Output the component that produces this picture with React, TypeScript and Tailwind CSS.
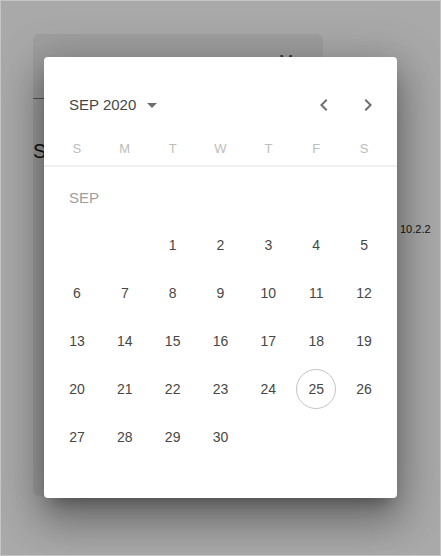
const weekdays = ['S', 'M', 'T', 'W', 'T', 'F', 'S'];

// September 2020 starts on a Tuesday
const leadingBlanks = 2;
const daysInMonth = 30;
const selectedDay = 25;

function ArrowDropDown() {
  return (
    <svg width="24" height="24" viewBox="0 0 24 24" className="fill-[#6f6f6f]">
      <path d="M7 10l5 5 5-5z" />
    </svg>
  );
}

function Chevron({ dir }: { dir: 'left' | 'right' }) {
  return (
    <svg width="24" height="24" viewBox="0 0 24 24" className="fill-[#6e6e6e]">
      {dir === 'left' ? (
        <path d="M15.41 7.41 14 6l-6 6 6 6 1.41-1.41L10.83 12z" />
      ) : (
        <path d="M10 6 8.59 7.41 13.17 12l-4.58 4.59L10 18l6-6z" />
      )}
    </svg>
  );
}

function DatePicker() {
  const cells: (number | null)[] = [
    ...Array.from({ length: leadingBlanks }, () => null),
    ...Array.from({ length: daysInMonth }, (_, i) => i + 1),
  ];

  return (
    <div className="absolute left-[43px] top-[56px] w-[353px] h-[441px] bg-white rounded-[4px] pt-[24px] shadow-[0_11px_15px_-7px_rgba(0,0,0,0.3),0_24px_38px_3px_rgba(0,0,0,0.22),0_9px_46px_8px_rgba(0,0,0,0.2)]">
      <div className="h-[48px] flex items-center pl-[25px] pr-[17px]">
        <div className="flex items-center gap-[4px]">
          <span className="text-[15px] text-[#474747]">SEP 2020</span>
          <ArrowDropDown />
        </div>
        <div className="ml-auto flex items-center gap-[20px]">
          <Chevron dir="left" />
          <Chevron dir="right" />
        </div>
      </div>

      <div className="mt-[4px] h-[32px] grid grid-cols-7 px-[9px] items-center">
        {weekdays.map((d, i) => (
          <span key={i} className="text-center text-[13px] text-[#bdbdbd]">
            {d}
          </span>
        ))}
      </div>
      <div className="h-[2px] bg-[#f0f0f0]" />

      <div className="h-[54px] pt-[8px] pl-[25px] flex items-center text-[15px] text-[#9e9e9e]">
        SEP
      </div>

      <div className="grid grid-cols-7 px-[9px]">
        {cells.map((day, i) => (
          <div key={i} className="h-[48px] flex items-center justify-center">
            {day !== null && (
              <span
                className={
                  day === selectedDay
                    ? 'w-[40px] h-[40px] rounded-full border border-[#c4c4c4] flex items-center justify-center text-[14px] text-[#474747]'
                    : 'text-[14px] text-[#474747]'
                }
              >
                {day}
              </span>
            )}
          </div>
        ))}
      </div>
    </div>
  );
}

export default function App() {
  return (
    <div className="relative h-[556px] overflow-hidden bg-[#a9a9a9] border border-[#c4c4c4] font-['Liberation_Sans',Arial,sans-serif] flex items-start">
      {/* page behind the modal */}
      <div className="ml-[32px] mt-[33px] w-[290px] h-[462px] rounded-md bg-[#9f9f9f] flex flex-col">
        <span className="mt-[18px] ml-[246px] h-[20px] leading-[20px] text-[17px] text-[#333]">M</span>
        <div className="mt-[26px] h-px w-[220px] bg-[#555]" />
        <span className="mt-[40px] leading-[24px] text-[20px] text-[#111]">S</span>
      </div>
      <span className="ml-[77px] mt-[221px] text-[11px] leading-[14px] text-[#111]">10.2.2</span>

      <DatePicker />
    </div>
  );
}
